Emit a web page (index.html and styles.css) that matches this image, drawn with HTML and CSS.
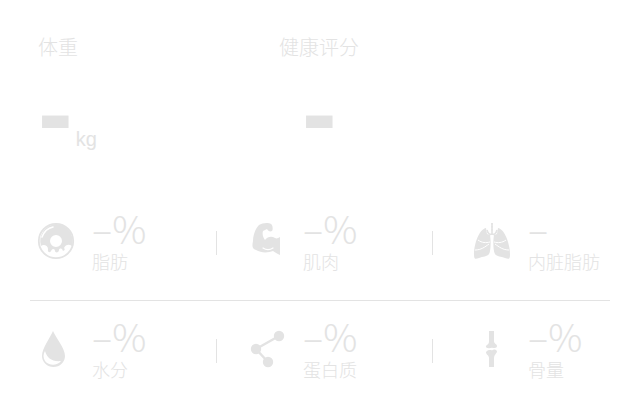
FILE: index.html
```html
<!DOCTYPE html>
<html lang="zh-CN">
<head>
<meta charset="utf-8">
<meta name="viewport" content="width=device-width, initial-scale=1">
<title>体重</title>
<link rel="stylesheet" href="styles.css">
</head>
<body>
<main class="panel">
  <section class="summary">
    <div class="stat">
      <h2 class="stat-title">体重</h2>
      <p class="stat-value"><span class="big">-</span><span class="unit">kg</span></p>
    </div>
    <div class="stat score">
      <h2 class="stat-title">健康评分</h2>
      <p class="stat-value"><span class="big">-</span></p>
    </div>
  </section>
  <section class="metrics">
    <div class="row">
      <div class="metric">
        <svg class="icon" viewBox="0 0 36 36" aria-hidden="true">
          <circle cx="18" cy="18" r="17.2" fill="none" stroke="currentColor" stroke-width="1.8"/>
          <path fill="currentColor" fill-rule="evenodd" d="M18 1A17 17 0 0 0 3 23C5 21 10 22 10 26C9 30 13 30 13.500 27C15 25 17 26 17 28C17 30 21 30 21 27C21 25 24 25 24.500 27C25 29 28 27 26 25C28 21 31 21 34 23A17 17 0 0 0 18 1ZM18 12A6 6 0 1 1 18 24A6 6 0 1 1 18 12Z"/>
          <path d="M4 14C6 9 10 5 15 4" fill="none" stroke="#fff" stroke-width="1.6" stroke-linecap="round"/>
        </svg>
        <div class="reading"><span class="value">–%</span><span class="label">脂肪</span></div>
      </div>
      <div class="metric">
        <svg class="icon" viewBox="0 0 36 36" aria-hidden="true">
          <path fill="currentColor" d="M10 2C13 0 19-1 22 1C24 2 24 7 23 8C21 9 19 8 18 6L14 8C13 11 14 14 16 17C19 13 23 13 26 15C28 16 29 15 31 14V32C28 31 26 29 24 28C19 30 12 30 7 27C3 26 3 23 4 18C4 11 7 5 10 2Z"/>
          <path d="M14 25C17 27 21 27 24 25" fill="none" stroke="#fff" stroke-width="1.2" stroke-linecap="round"/>
        </svg>
        <div class="reading"><span class="value">–%</span><span class="label">肌肉</span></div>
      </div>
      <div class="metric">
        <svg class="icon" viewBox="0 0 36 36" aria-hidden="true">
          <path fill="currentColor" d="M12 5C6 6 0 19 0 32C0 37 2 36 5 35C9 33 13 34 15 31C17 28 17 17 16 12L13 11ZM24 5C30 6 36 19 36 32C36 37 34 36 31 35C27 33 23 34 21 31C19 28 19 17 20 12L23 11Z"/>
          <path d="M18 0V11M18 11C16 12 14 11 13 7M18 11C20 12 22 11 23 7" fill="none" stroke="currentColor" stroke-width="1.6"/>
          <path d="M17 1H19M17 4H19M17 7H19" stroke="currentColor" stroke-width="1"/>
          <path d="M4 17C8 20 12 20 16 19M32 17C28 20 24 20 20 19M1 27C7 27 11 24 15 21M35 27C29 27 25 24 21 21" fill="none" stroke="#fff" stroke-width="1"/>
        </svg>
        <div class="reading"><span class="value">–</span><span class="label">内脏脂肪</span></div>
      </div>
    </div>
    <div class="row">
      <div class="metric">
        <svg class="icon" viewBox="0 0 36 36" aria-hidden="true">
          <path fill="currentColor" d="M15 0C18 7 27 17 27 25A11.500 11 0 0 1 4 25C4 17 12 7 15 0Z"/>
          <path fill="#fff" d="M7 20C9 27 14 31 23 30C19 35 11 35 7 30C5 27 5 23 7 20Z"/>
        </svg>
        <div class="reading"><span class="value">–%</span><span class="label">水分</span></div>
      </div>
      <div class="metric">
        <svg class="icon" viewBox="0 0 36 36" aria-hidden="true">
          <path d="M30 5L7 18L19 31" fill="none" stroke="currentColor" stroke-width="2.4"/>
          <g fill="currentColor"><circle cx="30" cy="5" r="5.2"/><circle cx="7" cy="18" r="5.2"/><circle cx="19" cy="31" r="5.2"/></g>
        </svg>
        <div class="reading"><span class="value">–%</span><span class="label">蛋白质</span></div>
      </div>
      <div class="metric">
        <svg class="icon" viewBox="0 0 36 36" aria-hidden="true">
          <path fill="currentColor" d="M15 0H20L20 10C20 13 23 13 23 15C23 17 21 17 19 17C17 16 16 18 14 17C12 17 11 15 13 14C15 13 15 11 15 9ZM13 20C15 18 17 20 19 19C21 18 23 19 23 21C22 23 20 24 20 27V36H15V27C15 24 12 24 12 21Z"/>
        </svg>
        <div class="reading"><span class="value">–%</span><span class="label">骨量</span></div>
      </div>
    </div>
  </section>
</main>
</body>
</html>
```
FILE: styles.css
```css
* { box-sizing: border-box; }
body {
  margin: 0;
  background: #fff;
  color: #e3e3e3;
  font-family: "Liberation Sans", "Noto Sans CJK SC", sans-serif;
}
.panel { padding: 36px 30px 0; }
.summary {
  display: grid;
  grid-template-columns: 241fr 331fr;
  padding-left: 8px;
}
.stat-title {
  margin: 0;
  font: 300 20px/24px "Liberation Sans", "Noto Sans CJK SC", sans-serif;
}
.stat-value {
  display: flex;
  align-items: flex-start;
  gap: 3px;
  height: 130px;
  margin: 0;
}
.score .stat-value { padding-left: 23px; }
.big { font-size: 104px; font-weight: 700; line-height: 106px; }
.unit { padding-top: 67px; font-size: 20px; line-height: 24px; }
.row {
  display: grid;
  grid-template-columns: 187fr 216fr 177fr;
  padding: 10px 0 18px;
}
.row + .row { border-top: 1px solid #e3e3e3; padding-top: 7px; }
.metric {
  position: relative;
  display: flex;
  align-items: center;
  gap: 18px;
  height: 82px;
  padding-left: 8px;
}
.metric + .metric { padding-left: 32px; }
.metric + .metric + .metric { padding-left: 41px; }
.metric + .metric::before {
  content: "";
  position: absolute;
  left: 0;
  top: 52%;
  height: 24px;
  border-left: 1px solid #e3e3e3;
  transform: translate(-1px, -50%);
}
.icon { width: 36px; height: 36px; flex: none; overflow: visible; }
.reading { display: flex; flex-direction: column; }
.value { font: 300 38px/40px "Noto Sans CJK SC", sans-serif; }
.label { font: 300 18px/26px "Noto Sans CJK SC", sans-serif; }
```
